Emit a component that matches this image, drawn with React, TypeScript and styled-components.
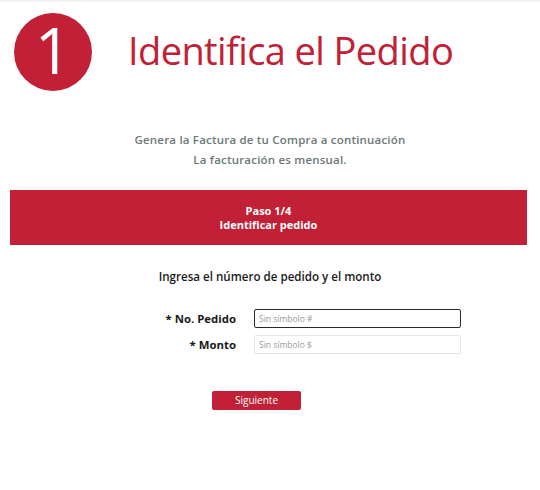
import * as React from 'react';
import styled, { createGlobalStyle } from 'styled-components';

const red = '#c22036';

const GlobalStyle = createGlobalStyle`
  body {
    margin: 0;
    background: #ffffff;
    font-family: "Open Sans", "Liberation Sans", sans-serif;
  }
`;

const Page = styled.div`
  width: 540px;
  height: 490px;
  border-top: 2px solid #f2f2f2;
  box-sizing: border-box;
`;

const Header = styled.header`
  display: flex;
  align-items: center;
  padding: 10px 0 0 14px;
  height: 80px;
`;

const StepCircle = styled.div`
  width: 78px;
  height: 78px;
  border-radius: 50%;
  background: ${red};
  color: #ffffff;
  display: flex;
  align-items: center;
  justify-content: center;
  font-size: 64px;
  font-weight: 400;
  line-height: 1;
  padding-bottom: 4px;
  box-sizing: border-box;
`;

const Title = styled.h1`
  margin: 0 0 4px 36px;
  font-size: 38px;
  font-weight: 400;
  color: ${red};
  letter-spacing: -0.6px;
`;

const Intro = styled.div`
  margin-top: 38px;
  text-align: center;
  color: #6c7878;
  font-size: 11.5px;
  font-weight: 600;
  line-height: 20px;
  letter-spacing: 0.2px;
`;

const StepBand = styled.div`
  margin: 20px 13px 0 10px;
  height: 55px;
  background: ${red};
  color: #ffffff;
  display: flex;
  flex-direction: column;
  align-items: center;
  justify-content: center;
  font-size: 11px;
  font-weight: 700;
  line-height: 14px;
`;

const Prompt = styled.h2`
  margin: 24px 0 0;
  text-align: center;
  font-size: 11.6px;
  font-weight: 600;
  color: #1a1a1a;
`;

const Form = styled.form`
  margin-top: 25px;
  display: grid;
  grid-template-columns: 236px 207px;
  column-gap: 18px;
  row-gap: 7px;
  align-items: center;
`;

const Label = styled.label`
  text-align: right;
  font-size: 11.4px;
  font-weight: 700;
  color: #1a1a1a;
`;

const Input = styled.input<{ $focused?: boolean }>`
  height: 19px;
  box-sizing: border-box;
  border: 1px solid ${p => (p.$focused ? '#2a2a2a' : '#e6e6e6')};
  border-radius: 2px;
  padding: 0 4px;
  font-family: inherit;
  font-size: 8.5px;
  color: #333;
  outline: none;
  &::placeholder {
    color: #9a9a9a;
  }
`;

const Actions = styled.div`
  margin-top: 33px;
  padding-left: 212px;
`;

const NextButton = styled.button`
  width: 89px;
  height: 19px;
  border: none;
  border-radius: 2px;
  background: ${red};
  color: #ffffff;
  font-family: inherit;
  font-size: 10px;
  padding: 0;
`;

export default function App() {
  return (
    <Page>
      <GlobalStyle />
      <Header>
        <StepCircle>1</StepCircle>
        <Title>Identifica el Pedido</Title>
      </Header>
      <Intro>
        <div>Genera la Factura de tu Compra a continuación</div>
        <div>La facturación es mensual.</div>
      </Intro>
      <StepBand>
        <div>Paso 1/4</div>
        <div>Identificar pedido</div>
      </StepBand>
      <Prompt>Ingresa el número de pedido y el monto</Prompt>
      <Form onSubmit={e => e.preventDefault()}>
        <Label htmlFor="pedido">* No. Pedido</Label>
        <Input id="pedido" placeholder="Sin símbolo #" $focused />
        <Label htmlFor="monto">* Monto</Label>
        <Input id="monto" placeholder="Sin símbolo $" />
      </Form>
      <Actions>
        <NextButton type="button">Siguiente</NextButton>
      </Actions>
    </Page>
  );
}
